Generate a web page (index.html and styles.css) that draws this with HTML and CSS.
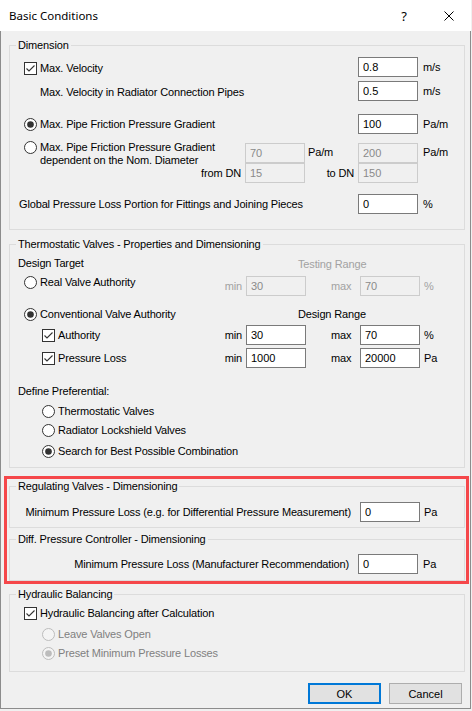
FILE: index.html
```html
<!DOCTYPE html>
<html lang="en">
<head>
<meta charset="utf-8">
<title>Basic Conditions</title>
<link rel="stylesheet" href="styles.css">
</head>
<body>
<svg class="defs" width="0" height="0" aria-hidden="true">
  <defs>
    <symbol id="cb-on" viewBox="0 0 13 13">
      <rect x="0.5" y="0.5" width="12" height="12" fill="#fff" stroke="#333"/>
      <path d="M2.5 6.5 L5 9 L10.5 3.5" fill="none" stroke="#333" stroke-width="1.1"/>
    </symbol>
    <symbol id="rd-off" viewBox="0 0 13 13">
      <circle cx="6.5" cy="6.5" r="6" fill="#fff" stroke="#333"/>
    </symbol>
    <symbol id="rd-on" viewBox="0 0 13 13">
      <circle cx="6.5" cy="6.5" r="6" fill="#fff" stroke="#333"/>
      <circle cx="6.5" cy="6.5" r="3.3" fill="#333"/>
    </symbol>
    <symbol id="rd-dis-off" viewBox="0 0 13 13">
      <circle cx="6.5" cy="6.5" r="6" fill="#f4f4f4" stroke="#bcbcbc"/>
    </symbol>
    <symbol id="rd-dis-on" viewBox="0 0 13 13">
      <circle cx="6.5" cy="6.5" r="6" fill="#f4f4f4" stroke="#bcbcbc"/>
      <circle cx="6.5" cy="6.5" r="3.3" fill="#bcbcbc"/>
    </symbol>
  </defs>
</svg>

<div class="window">
  <div class="titlebar">
    <span class="title">Basic Conditions</span>
    <span class="help">?</span>
    <span class="close"><svg width="10" height="10" viewBox="0 0 10 10"><path d="M0.5 0.5 L9.5 9.5 M9.5 0.5 L0.5 9.5" stroke="#000" stroke-width="1" fill="none"/></svg></span>
  </div>

  <div class="client">
    <fieldset class="group dim">
      <legend>Dimension</legend>
      <div class="row ga mt5">
        <label class="opt c13 dn3"><svg class="ic"><use href="#cb-on"/></svg>Max. Velocity</label>
        <input class="inp c4" type="text" value="0.8">
        <span class="unit c5">m/s</span>
      </div>
      <div class="row ga mt4">
        <span class="c13 pl16 dn2">Max. Velocity in Radiator Connection Pipes</span>
        <input class="inp c4" type="text" value="0.5">
        <span class="unit c5">m/s</span>
      </div>
      <div class="row ga mt13">
        <label class="opt c13"><svg class="ic"><use href="#rd-on"/></svg>Max. Pipe Friction Pressure Gradient</label>
        <input class="inp c4" type="text" value="100">
        <span class="unit c5">Pa/m</span>
      </div>
      <div class="row ga mt4">
        <label class="opt multi c1"><svg class="ic"><use href="#rd-off"/></svg><span>Max. Pipe Friction Pressure Gradient<br>dependent on the Nom. Diameter</span></label>
        <input class="inp c2" type="text" value="70" disabled>
        <span class="c3 pl3">Pa/m</span>
        <input class="inp c4" type="text" value="200" disabled>
        <span class="unit c5">Pa/m</span>
      </div>
      <div class="row ga mt5">
        <span class="c1 rt">from DN</span>
        <input class="inp c2" type="text" value="15" disabled>
        <span class="c3 rt">to DN</span>
        <input class="inp c4" type="text" value="150" disabled>
      </div>
      <div class="row ga mt11">
        <span class="c13 out5">Global Pressure Loss Portion for Fittings and Joining Pieces</span>
        <input class="inp c4" type="text" value="0">
        <span class="unit c5">%</span>
      </div>
    </fieldset>

    <fieldset class="group thermo">
      <legend>Thermostatic Valves - Properties and Dimensioning</legend>
      <div class="row gb h14 mt4">
        <span class="c1 out6">Design Target</span>
        <span class="c25 pl52 dn3 faint">Testing Range</span>
      </div>
      <div class="row gb mt7">
        <label class="opt c1 top"><svg class="ic"><use href="#rd-off"/></svg>Real Valve Authority</label>
        <span class="c1 rt faint">min</span>
        <input class="inp c2" type="text" value="30" disabled>
        <span class="c3 pl25 faint">max</span>
        <input class="inp c4" type="text" value="70" disabled>
        <span class="unit c5 faint">%</span>
      </div>
      <div class="row gb h14 mt11">
        <label class="opt c1"><svg class="ic"><use href="#rd-on"/></svg>Conventional Valve Authority</label>
        <span class="c25 pl52">Design Range</span>
      </div>
      <div class="row gb mt4">
        <label class="opt c1 ind"><svg class="ic"><use href="#cb-on"/></svg>Authority</label>
        <span class="c1 rt">min</span>
        <input class="inp c2" type="text" value="30">
        <span class="c3 pl25">max</span>
        <input class="inp c4" type="text" value="70">
        <span class="unit c5">%</span>
      </div>
      <div class="row gb mt3">
        <label class="opt c1 ind"><svg class="ic"><use href="#cb-on"/></svg>Pressure Loss</label>
        <span class="c1 rt">min</span>
        <input class="inp c2" type="text" value="1000">
        <span class="c3 pl25">max</span>
        <input class="inp c4" type="text" value="20000">
        <span class="unit c5">Pa</span>
      </div>
      <div class="row gb h14 mt16">
        <span class="c13 out6">Define Preferential:</span>
      </div>
      <div class="row gb h14 mt6">
        <label class="opt c13 ind"><svg class="ic"><use href="#rd-off"/></svg>Thermostatic Valves</label>
      </div>
      <div class="row gb h14 mt5">
        <label class="opt c13 ind"><svg class="ic"><use href="#rd-off"/></svg>Radiator Lockshield Valves</label>
      </div>
      <div class="row gb h14 mt7">
        <label class="opt c13 ind"><svg class="ic"><use href="#rd-on"/></svg>Search for Best Possible Combination</label>
      </div>
    </fieldset>

    <div class="highlight">
      <fieldset class="group reg">
        <legend>Regulating Valves - Dimensioning</legend>
        <div class="row gb mt9">
          <span class="c13 rt pr9">Minimum Pressure Loss (e.g. for Differential Pressure Measurement)</span>
          <input class="inp c4" type="text" value="0">
          <span class="unit c5">Pa</span>
        </div>
      </fieldset>
      <fieldset class="group diff">
        <legend>Diff. Pressure Controller - Dimensioning</legend>
        <div class="row ga mt8">
          <span class="c13 rt pr9">Minimum Pressure Loss (Manufacturer Recommendation)</span>
          <input class="inp c4" type="text" value="0">
          <span class="unit c5">Pa</span>
        </div>
      </fieldset>
    </div>

    <fieldset class="group hyd">
      <legend>Hydraulic Balancing</legend>
      <div class="row ga h14 mt5">
        <label class="opt c13"><svg class="ic"><use href="#cb-on"/></svg>Hydraulic Balancing after Calculation</label>
      </div>
      <div class="row ga h14 mt7">
        <label class="opt c13 ind grey"><svg class="ic"><use href="#rd-dis-off"/></svg>Leave Valves Open</label>
      </div>
      <div class="row ga h14 mt5">
        <label class="opt c13 ind grey"><svg class="ic"><use href="#rd-dis-on"/></svg>Preset Minimum Pressure Losses</label>
      </div>
    </fieldset>

    <div class="buttons">
      <button class="btn default" type="button">OK</button>
      <button class="btn" type="button">Cancel</button>
    </div>
  </div>
</div>
</body>
</html>
```

FILE: styles.css
```css
html, body {
  margin: 0;
  padding: 0;
  background: #f0f0f0;
}

body {
  font-family: "Liberation Sans", Arial, sans-serif;
  font-size: 11px;
  letter-spacing: -0.15px;
  color: #000;
}

.defs {
  position: absolute;
  width: 0;
  height: 0;
  overflow: hidden;
}

.window {
  width: 471px;
  background: #f0f0f0;
}

/* title bar */
.titlebar {
  height: 31px;
  background: #fff;
  display: flex;
  align-items: center;
  letter-spacing: 0;
}

.title {
  flex: 1;
  margin-left: 9px;
  font-family: "Noto Sans", "Open Sans", sans-serif;
  font-size: 11.5px;
}

.help {
  width: 12px;
  margin-right: 34px;
  text-align: center;
  font-family: "Noto Sans", "Open Sans", sans-serif;
  font-size: 13px;
}

.close {
  width: 10px;
  height: 10px;
  margin-right: 17px;
  display: flex;
}

/* client area */
.client {
  border: 1px solid #8c8c8c;
  border-top: none;
  padding: 7px 5px 4px 8px;
}

.group {
  margin: 0;
  padding: 0;
  min-width: 0;
  border: 1px solid #dcdcdc;
}

.group > legend {
  margin-left: 6px;
  padding: 0 2px;
  height: 14px;
  line-height: 14px;
}

.dim { padding-bottom: 15px; }
.thermo { margin-top: 7px; padding-bottom: 9px; }
.reg { padding-bottom: 5px; }
.diff { margin-top: 4px; padding-bottom: 6px; }
.hyd { margin-top: 3px; padding-bottom: 11px; }

.highlight {
  margin: 8px -4px 0 -5px;
  padding: 0 1px 0 2px;
  border: 3px solid #f5474a;
}

/* rows */
.row {
  display: grid;
  height: 20px;
  align-items: center;
  padding-left: 14px;
  line-height: 13px;
  white-space: nowrap;
}

.row > * { grid-row: 1; }

.ga { grid-template-columns: 1fr 60px 53px 60px 46px; }
.gb { grid-template-columns: 1fr 60px 54px 60px 44px; }

.h14 { height: 14px; }

.mt3 { margin-top: 3px; }
.mt4 { margin-top: 4px; }
.mt5 { margin-top: 5px; }
.mt6 { margin-top: 6px; }
.mt7 { margin-top: 7px; }
.mt8 { margin-top: 8px; }
.mt9 { margin-top: 9px; }
.mt11 { margin-top: 11px; }
.mt13 { margin-top: 13px; }
.mt16 { margin-top: 16px; }

.c1 { grid-column: 1; }
.c2 { grid-column: 2; }
.c3 { grid-column: 3; }
.c4 { grid-column: 4; }
.c5 { grid-column: 5; }
.c13 { grid-column: 1 / 4; }
.c25 { grid-column: 2 / 6; }

.pl3 { padding-left: 3px; }
.pl16 { padding-left: 16px; }
.pl25 { padding-left: 25px; }
.pl52 { padding-left: 52px; }
.pr9 { padding-right: 9px; }
.out5 { margin-left: -5px; }
.out6 { margin-left: -6px; }
.dn2 { margin-top: 2px; }
.dn3 { margin-top: 3px; }

.rt {
  justify-self: end;
  padding-right: 4px;
}
.rt.pr9 { padding-right: 9px; }

.unit { padding-left: 5px; }
.gb .unit { padding-left: 4px; }

.faint { color: #a2a2a2; }
.grey { color: #808080; }

/* options */
.opt {
  display: flex;
  align-items: center;
  gap: 3px;
}

.opt.multi {
  align-self: start;
  align-items: flex-start;
  margin-top: 3px;
}

.opt.top { align-self: start; }

.ind { margin-left: 18px; }

.ic {
  width: 13px;
  height: 13px;
  flex: none;
}

/* inputs */
.inp {
  box-sizing: border-box;
  width: 60px;
  height: 20px;
  margin: 0;
  padding: 0 4px;
  border: 1px solid #7a7a7a;
  border-radius: 0;
  background: #fff;
  color: #000;
  font-family: "Liberation Sans", Arial, sans-serif;
  font-size: 11px;
  outline: none;
}

.inp:disabled {
  border-color: #cccccc;
  background: #f0f0f0;
  color: #8a8a8a;
}

/* buttons */
.buttons {
  display: flex;
  justify-content: flex-end;
  gap: 8px;
  margin-top: 11px;
  padding-right: 3px;
}

.btn {
  box-sizing: border-box;
  width: 73px;
  height: 21px;
  margin: 0;
  padding: 0;
  border: 1px solid #adadad;
  border-radius: 0;
  background: #e1e1e1;
  color: #000;
  font-family: "Liberation Sans", Arial, sans-serif;
  font-size: 11px;
}

.btn.default { border: 2px solid #0078d7; }
```
